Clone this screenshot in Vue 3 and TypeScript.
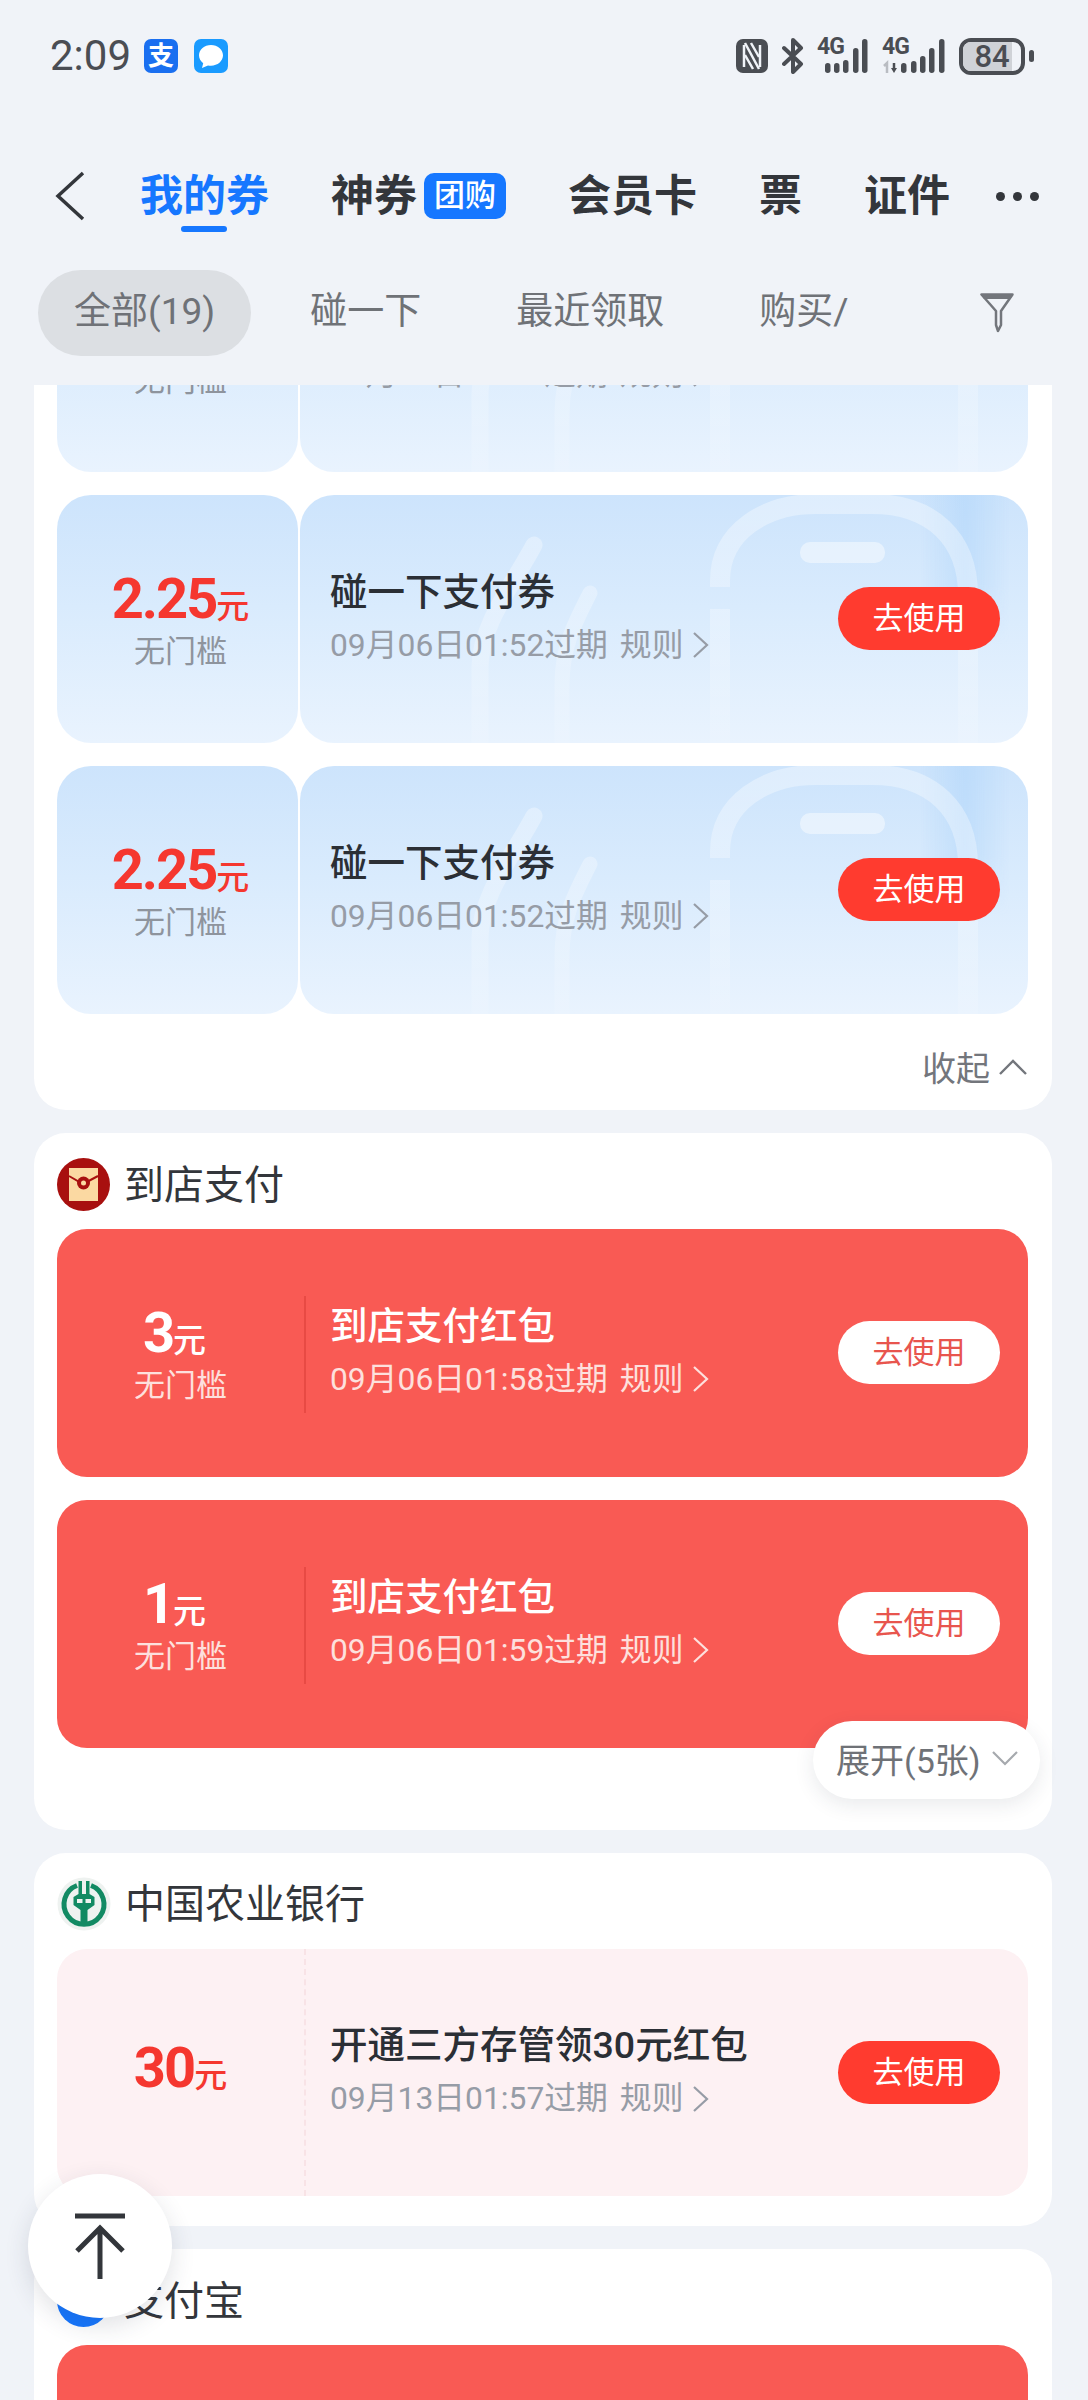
<script setup lang="ts">
interface Coupon {
  amount: string;
  note?: string;
  title: string;
  expire: string;
}

const tabs = ["神券", "会员卡", "票", "证件"];
const filters = ["全部(19)", "碰一下", "最近领取", "购买/"];

const nfcCoupons: Coupon[] = [
  { amount: "2.25", note: "无门槛", title: "碰一下支付券", expire: "09月06日01:52过期" },
  { amount: "2.25", note: "无门槛", title: "碰一下支付券", expire: "09月06日01:52过期" },
  { amount: "2.25", note: "无门槛", title: "碰一下支付券", expire: "09月06日01:52过期" },
];
const storeCoupons: Coupon[] = [
  { amount: "3", note: "无门槛", title: "到店支付红包", expire: "09月06日01:58过期" },
  { amount: "1", note: "无门槛", title: "到店支付红包", expire: "09月06日01:59过期" },
];
const bankCoupons: Coupon[] = [
  { amount: "30", title: "开通三方存管领30元红包", expire: "09月13日01:57过期" },
];
const signalA = [
  { x: 8, y: 25, h: 10 },
  { x: 17, y: 25, h: 10 },
  { x: 26, y: 22, h: 13 },
  { x: 36, y: 10, h: 25 },
  { x: 45, y: 1, h: 34 },
];
const signalB = [
  { x: 19, y: 25, h: 10 },
  { x: 29, y: 23, h: 12 },
  { x: 38, y: 18, h: 17 },
  { x: 47, y: 10, h: 25 },
  { x: 57, y: 1, h: 34 },
];
</script>

<template>
  <div class="page">
    <div class="status">
      <div class="status-left">
        <span class="time">2:09</span>
        <span class="app-alipay">支</span>
        <span class="app-msg">
          <svg width="34" height="34" viewBox="0 0 34 34">
            <path d="M17 6c-6.600 0-12 4.500-12 10.300 0 3.200 1.600 6 4.200 7.900L8 29l6-2.600c1 .2 2 .3 3 .3 6.600 0 12-4.600 12-10.400S23.600 6 17 6z" fill="#fff" />
          </svg>
        </span>
      </div>
      <div class="status-right">
        <svg width="32" height="34" viewBox="0 0 32 34">
          <rect width="32" height="34" rx="7" fill="#4a4d53" />
          <path d="M8 6v22M24 6v22" stroke="#f0f3f8" stroke-width="2.500" />
          <path d="M9 4l14 26M15 4l8 14M9 16l8 14" stroke="#f0f3f8" stroke-width="2.500" fill="none" />
        </svg>
        <svg class="bt" width="22" height="36" viewBox="0 0 22 36">
          <path d="M2 10l17 16-8 8V2l8 8L2 26" fill="none" stroke="#4a4d53" stroke-width="4" stroke-linejoin="round" stroke-linecap="round" />
        </svg>
        <span class="signal signal-a">
          <span class="net">4G</span>
          <svg width="52" height="36" viewBox="0 0 52 36">
            <rect v-for="b in signalA" :key="b.x" :x="b.x" :y="b.y" width="5.500" :height="b.h" rx="2.700" fill="#4a4d53" />
          </svg>
        </span>
        <span class="signal signal-b">
          <span class="net">4G</span>
          <svg width="64" height="36" viewBox="0 0 64 36">
            <path d="M5 35V25l-3 3" fill="none" stroke="#b9bcc2" stroke-width="2.500" />
            <path d="M12 25v6" stroke="#4a4d53" stroke-width="2.500" />
            <path d="M9 30h6l-3 5z" fill="#4a4d53" />
            <rect v-for="b in signalB" :key="b.x" :x="b.x" :y="b.y" width="5.500" :height="b.h" rx="2.700" fill="#4a4d53" />
          </svg>
        </span>
        <span class="battery">
          <span class="battery-level"></span>
          <span class="battery-num">84</span>
        </span>
        <span class="battery-nub"></span>
      </div>
    </div>

    <div class="nav">
      <svg class="back" width="32" height="50" viewBox="0 0 32 50">
        <path d="M29 2L4 25l25 23" fill="none" stroke="#33363b" stroke-width="3.500" />
      </svg>
      <div class="tab active">我的券</div>
      <div v-for="tab in tabs" :key="tab" class="tab">
        {{ tab }}<span v-if="tab === '神券'" class="badge">团购</span>
      </div>
      <div class="more"><i></i><i></i><i></i></div>
    </div>

    <div class="filters">
      <div v-for="(f, i) in filters" :key="f" class="filter" :class="{ on: i === 0 }">{{ f }}</div>
      <svg class="funnel" width="34" height="40" viewBox="0 0 34 40">
        <path d="M1.500 1.500h31L21 18v14l-3 6V38l-2-6V18z" fill="none" stroke="#73767c" stroke-width="2.500" stroke-linejoin="round" />
        <path d="M1.500 2h31l-2 4H4z" fill="#73767c" />
      </svg>
    </div>

    <div class="list">
      <div class="scroll">
        <section class="group first">
          <div v-for="(c, i) in nfcCoupons" :key="i" class="coupon blue">
            <div class="side">
              <div class="amount">{{ c.amount }}<small>元</small></div>
              <div class="note">{{ c.note }}</div>
            </div>
            <div class="body">
              <svg class="decor" width="728" height="248" viewBox="0 0 728 248">
                <defs>
                  <linearGradient id="streak" x1="0" x2="1" y1="0" y2="0">
                    <stop offset="0" stop-color="#a9d2fa" stop-opacity="0" />
                    <stop offset=".5" stop-color="#a9d2fa" stop-opacity=".45" />
                    <stop offset="1" stop-color="#a9d2fa" stop-opacity="0" />
                  </linearGradient>
                  <linearGradient id="fadeOut" x1="0" x2="0" y1="0" y2="1">
                    <stop offset="0" stop-color="#fff" />
                    <stop offset=".6" stop-color="#fff" />
                    <stop offset="1" stop-color="#000" />
                  </linearGradient>
                  <linearGradient id="wave" gradientUnits="userSpaceOnUse" x1="0" x2="0" y1="0" y2="248">
                    <stop offset="0" stop-color="#fff" stop-opacity=".36" />
                    <stop offset=".5" stop-color="#fff" stop-opacity=".28" />
                    <stop offset="1" stop-color="#fff" stop-opacity=".1" />
                  </linearGradient>
                  <mask id="streakMask"><rect width="728" height="150" fill="url(#fadeOut)" /></mask>
                </defs>
                <rect x="620" width="90" height="150" fill="url(#streak)" mask="url(#streakMask)" />
                <g fill="none" stroke="url(#wave)" stroke-linecap="round">
                  <path d="M420 92V86C420 36 466 9 516 9H572C632 9 668 44 668 100V248" stroke-width="20" stroke-linecap="butt" />
                  <path d="M420 114V248" stroke-width="20" stroke-linecap="butt" />
                  <path d="M234 50C214 88 180 130 180 172V248" stroke-width="17" />
                  <path d="M290 98C276 126 262 150 262 190V248" stroke-width="15" />
                </g>
                <rect x="500" y="47" width="85" height="21" rx="10" fill="#fff" fill-opacity=".45" />
              </svg>
              <div class="info">
                <div class="name">{{ c.title }}</div>
                <div class="expire">
                  <span>{{ c.expire }}</span><span class="rule">规则</span>
                  <svg width="17" height="28" viewBox="0 0 17 28"><path d="M2 2l13 12L2 26" fill="none" stroke="currentColor" stroke-width="2.200" /></svg>
                </div>
              </div>
              <button class="use">去使用</button>
            </div>
          </div>
          <div class="fold">
            收起
            <svg width="30" height="18" viewBox="0 0 30 18"><path d="M2 16L15 3l13 13" fill="none" stroke="#73767c" stroke-width="2.400" /></svg>
          </div>
        </section>

        <section class="group store">
          <div class="head">
            <svg width="53" height="53" viewBox="0 0 53 53">
              <circle cx="26.500" cy="26.500" r="26.500" fill="#a8100f" />
              <rect x="12" y="10" width="29" height="33" fill="#fbd9a2" />
              <path d="M12 18l14 8 15-8" fill="none" stroke="#a8100f" stroke-width="2" />
              <circle cx="26.500" cy="25" r="6.500" fill="#a8100f" />
              <circle cx="26.500" cy="25" r="2.500" fill="#fbd9a2" />
            </svg>
            <span>到店支付</span>
          </div>
          <div v-for="(c, i) in storeCoupons" :key="i" class="coupon red">
            <div class="side">
              <div class="amount">{{ c.amount }}<small>元</small></div>
              <div class="note">{{ c.note }}</div>
            </div>
            <div class="body">
              <div class="info">
                <div class="name">{{ c.title }}</div>
                <div class="expire">
                  <span>{{ c.expire }}</span><span class="rule">规则</span>
                  <svg width="17" height="28" viewBox="0 0 17 28"><path d="M2 2l13 12L2 26" fill="none" stroke="currentColor" stroke-width="2.200" /></svg>
                </div>
              </div>
              <button class="use">去使用</button>
            </div>
          </div>
          <div class="unfold">
            展开(5张)
            <svg width="28" height="16" viewBox="0 0 28 16"><path d="M2 2l12 12L26 2" fill="none" stroke="#a6a9ae" stroke-width="2.200" /></svg>
          </div>
        </section>

        <section class="group bank">
          <div class="head">
            <svg width="54" height="54" viewBox="0 0 54 54">
              <circle cx="27" cy="27" r="26.500" fill="#eef2f0" />
              <path d="M20 8.500A20 20 0 1 0 34 8.500" fill="none" stroke="#128a63" stroke-width="5" />
              <path d="M21.500 4v13l-5 3v8l7 5v13h7V33l7-5v-8l-5-3V4h-3.500v13h-4V4z" fill="#128a63" />
              <path d="M20 22h5.500v4H20zM28.500 22H34v4h-5.500z" fill="#eef2f0" />
            </svg>
            <span>中国农业银行</span>
          </div>
          <div v-for="(c, i) in bankCoupons" :key="i" class="coupon pink">
            <div class="side">
              <div class="amount">{{ c.amount }}<small>元</small></div>
            </div>
            <div class="body">
              <div class="info">
                <div class="name">{{ c.title }}</div>
                <div class="expire">
                  <span>{{ c.expire }}</span><span class="rule">规则</span>
                  <svg width="17" height="28" viewBox="0 0 17 28"><path d="M2 2l13 12L2 26" fill="none" stroke="currentColor" stroke-width="2.200" /></svg>
                </div>
              </div>
              <button class="use">去使用</button>
            </div>
          </div>
        </section>

        <section class="group last">
          <div class="head">
            <svg width="53" height="53" viewBox="0 0 53 53"><circle cx="26.500" cy="26.500" r="26.500" fill="#1677ff" /></svg>
            <span>支付宝</span>
          </div>
          <div class="coupon red tail"></div>
        </section>
      </div>
    </div>

    <div class="to-top">
      <svg width="52" height="66" viewBox="0 0 52 66">
        <path d="M1 3h50" stroke="#33363b" stroke-width="5" />
        <path d="M26 66V15M3 38l23-23 23 23" fill="none" stroke="#33363b" stroke-width="5" />
      </svg>
    </div>
  </div>
</template>

<style scoped>
.page {
  position: relative;
  width: 1088px;
  height: 2400px;
  overflow: hidden;
  display: flex;
  flex-direction: column;
  background: #f0f3f8;
  font-family: Roboto, "Noto Sans CJK SC", sans-serif;
  color: #33363b;
}

.status {
  height: 112px;
  flex: none;
  display: flex;
  justify-content: space-between;
  align-items: center;
  padding: 0 54px 0 50px;
  box-sizing: border-box;
}

.status-left,
.status-right {
  display: flex;
  align-items: center;
}

.time {
  font-size: 42px;
  line-height: 48px;
  color: #4a4d53;
  width: 94px;
}

.app-alipay,
.app-msg {
  width: 34px;
  height: 34px;
  border-radius: 7px;
  display: flex;
  align-items: center;
  justify-content: center;
}

.app-alipay {
  background: #1a6ff0;
  color: #fff;
  font-size: 26px;
  font-weight: 700;
  line-height: 34px;
}

.app-msg {
  background: #1a9bff;
  margin-left: 16px;
}

.bt {
  margin-left: 14px;
}

.signal {
  position: relative;
  display: block;
  height: 36px;
}

.signal-a {
  width: 52px;
  margin-left: 13px;
}

.signal-b {
  width: 64px;
  margin-left: 13px;
}

.signal svg {
  display: block;
}

.net {
  position: absolute;
  left: 0;
  top: -2px;
  font-size: 23px;
  line-height: 22px;
  font-weight: 700;
  letter-spacing: -1px;
  color: #4a4d53;
}

.battery {
  position: relative;
  width: 66px;
  height: 37px;
  margin-left: 13px;
  border: 4px solid #4a4d53;
  border-radius: 12px;
  box-sizing: border-box;
  overflow: hidden;
}

.battery-level {
  position: absolute;
  left: 0;
  top: 0;
  bottom: 0;
  width: 85%;
  background: #cfd2d7;
}

.battery-num {
  position: relative;
  display: block;
  text-align: center;
  font-size: 31px;
  line-height: 29px;
  font-weight: 500;
  color: #4a4d53;
}

.battery-nub {
  width: 5px;
  height: 12px;
  margin-left: 4px;
  border-radius: 3px;
  background: #4a4d53;
}

.nav {
  height: 72px;
  margin-top: 48px;
  flex: none;
  display: flex;
  align-items: center;
  padding-left: 54px;
  gap: 62px;
}

.back {
  margin-right: -8px;
}

.tab {
  position: relative;
  display: flex;
  align-items: center;
  font-size: 43px;
  line-height: 60px;
  font-weight: 700;
  white-space: nowrap;
}

.tab.active {
  color: #1677ff;
}

.tab.active::after {
  content: "";
  position: absolute;
  left: 41px;
  bottom: -6px;
  width: 46px;
  height: 6px;
  border-radius: 3px;
  background: #1677ff;
}

.badge {
  margin-left: 7px;
  width: 82px;
  height: 46px;
  border-radius: 10px;
  background: #1677ff;
  color: #fff;
  font-size: 31px;
  font-weight: 500;
  line-height: 46px;
  text-align: center;
}

.more {
  display: flex;
  gap: 8px;
  margin-left: -16px;
}

.more i {
  width: 9px;
  height: 9px;
  border-radius: 50%;
  background: #33363b;
}

.filters {
  height: 86px;
  margin-top: 38px;
  flex: none;
  display: flex;
  align-items: center;
  padding-left: 38px;
  gap: 23px;
}

.filter {
  padding: 0 36px;
  height: 86px;
  line-height: 84px;
  border-radius: 43px;
  font-size: 37px;
  color: #6f7277;
  white-space: nowrap;
}

.filter.on {
  background: #dcdfe3;
}

.funnel {
  margin-left: auto;
  margin-right: 74px;
}

.list {
  flex: 1;
  margin-top: 29px;
  overflow: hidden;
}

.scroll {
  margin-top: -185px;
  padding: 0 36px 0 34px;
}

.group {
  position: relative;
  background: #fff;
  border-radius: 32px;
  padding: 24px 24px 30px 23px;
  margin-bottom: 23px;
}

.group.first {
  padding-bottom: 0;
}

.group.store {
  padding-bottom: 82px;
}

.head {
  display: flex;
  align-items: center;
  height: 54px;
  margin-bottom: 18px;
  font-size: 40px;
  color: #33363b;
}

.head span {
  margin-left: 14px;
  padding-bottom: 5px;
}

.coupon {
  position: relative;
  display: flex;
  height: 247.500px;
  border-radius: 30px;
}

.coupon + .coupon {
  margin-top: 23.500px;
}

.side {
  width: 247px;
  flex: none;
  display: flex;
  flex-direction: column;
  align-items: center;
  justify-content: center;
  box-sizing: border-box;
  padding-top: 8px;
}

.amount {
  font-size: 56px;
  line-height: 60px;
  font-weight: 700;
  letter-spacing: -2px;
  white-space: nowrap;
  color: #f5372f;
}

.amount small {
  font-size: 33px;
  font-weight: 500;
  letter-spacing: 0;
}

.note {
  margin-top: -9px;
  font-size: 31px;
  line-height: 48px;
  color: #8e949d;
}

.body {
  position: relative;
  flex: 1;
  display: flex;
  align-items: center;
  justify-content: space-between;
  padding: 0 28px 0 26px;
  overflow: hidden;
}

.decor {
  position: absolute;
  left: 0;
  top: 0;
}

.info {
  position: relative;
  white-space: nowrap;
}

.name {
  font-size: 37.500px;
  line-height: 53px;
  font-weight: 500;
  color: #2b2f35;
}

.expire {
  display: flex;
  align-items: center;
  font-size: 31.800px;
  line-height: 53px;
  color: #969ca6;
}

.expire svg {
  margin-left: 9px;
}

.rule {
  margin-left: 12px;
}

.use {
  position: relative;
  width: 162px;
  height: 63px;
  border: none;
  border-radius: 32px;
  padding: 0;
  background: #ff3b2f;
  color: #fff;
  font-family: inherit;
  font-size: 31px;
  line-height: 63px;
}

.blue .side,
.blue .body {
  background: linear-gradient(180deg, #cde4fc 0%, #d9ebfd 45%, #e9f3fe 100%);
  border-radius: 34px;
}

.blue .side {
  width: 241px;
  padding-left: 6px;
}

.blue .body {
  margin-left: 2px;
  padding-left: 30px;
}

.red {
  background: #f95a54;
}

.red .amount,
.red .name {
  color: #fff;
}

.red .amount {
  padding-right: 12px;
}

.red .note,
.red .expire {
  color: #fde0dd;
}

.red .body::before {
  content: "";
  position: absolute;
  left: 0;
  top: 67px;
  height: 117px;
  border-left: 2px solid #e84a44;
}

.red .use {
  background: #fff;
  color: #e8554e;
}

.pink {
  background: #fdf1f3;
}

.pink .side {
  padding-top: 0;
}

.pink .body {
  border-left: 2px dashed #f8e3e6;
  padding-left: 24px;
}

.tail {
  height: 80px;
  border-radius: 30px 30px 0 0;
}

.fold {
  display: flex;
  align-items: center;
  justify-content: flex-end;
  height: 96.500px;
  padding-top: 10px;
  box-sizing: border-box;
  font-size: 34px;
  color: #73767c;
}

.fold svg {
  margin-left: 8px;
}

.unfold {
  position: absolute;
  right: 12px;
  top: 588px;
  width: 227px;
  height: 78px;
  box-sizing: border-box;
  padding: 0 0 4px 23px;
  display: flex;
  align-items: center;
  border-radius: 39px;
  background: #fff;
  box-shadow: 0 6px 20px rgba(40, 50, 70, 0.1);
  font-size: 34px;
  color: #6f7277;
  white-space: nowrap;
}

.unfold svg {
  margin-left: 10px;
}

.to-top {
  position: absolute;
  left: 28px;
  top: 2174px;
  width: 144px;
  height: 144px;
  border-radius: 50%;
  background: #fff;
  box-shadow: 0 8px 24px rgba(40, 50, 70, 0.14);
  display: flex;
  align-items: center;
  justify-content: center;
}
</style>
